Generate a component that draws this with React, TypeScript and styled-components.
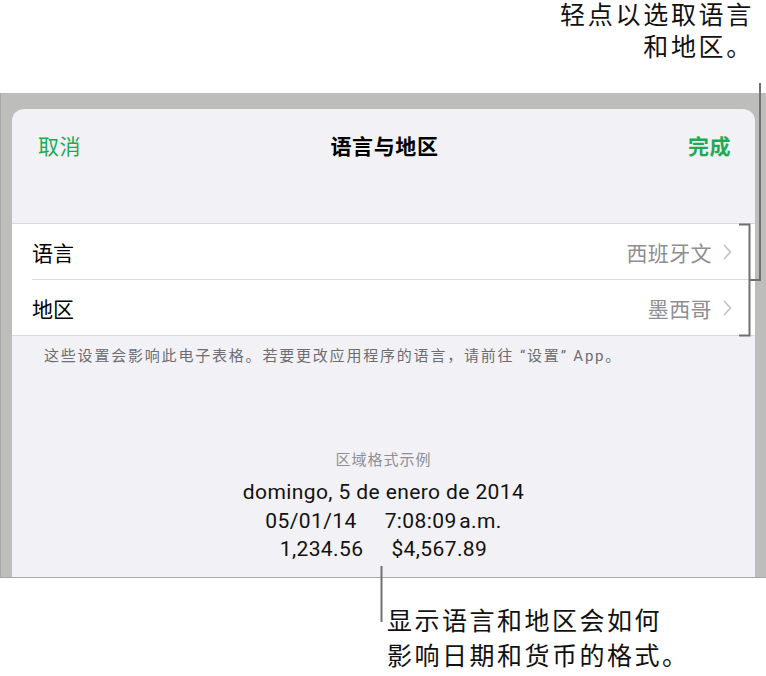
import React from "react";
import styled, { createGlobalStyle } from "styled-components";

const GlobalStyle = createGlobalStyle`
  html, body {
    margin: 0;
    padding: 0;
    background: #ffffff;
  }
  body {
    font-family: Roboto, "Noto Sans CJK SC", sans-serif;
    color: #000;
  }
`;

const GREEN = "#1fa955";
const LINE = "#707070";

const App: React.FC = () => {
  return (
    <>
      <GlobalStyle />
      <Page>
        <TopNote>
          轻点以选取语言
          <br />
          和地区。
        </TopNote>

        <Frame>
          <Sheet>
            <NavBar>
              <NavButton>取消</NavButton>
              <NavTitle>语言与地区</NavTitle>
              <NavButton bold>完成</NavButton>
            </NavBar>

            <Group>
              <Row>
                <RowLabel>语言</RowLabel>
                <RowValue>西班牙文</RowValue>
                <Chevron />
              </Row>
              <Row last>
                <RowLabel>地区</RowLabel>
                <RowValue>墨西哥</RowValue>
                <Chevron />
              </Row>
            </Group>
            <Footer>
              这些设置会影响此电子表格。若要更改应用程序的语言，请前往 “设置” App。
            </Footer>

            <Sample>
              <SampleTitle>区域格式示例</SampleTitle>
              <SampleLine>domingo, 5 de enero de 2014</SampleLine>
              <SampleLine>
                05/01/14<Gap />7:08:09&#8202;a.m.
              </SampleLine>
              <SampleLine>
                1,234.56<Gap />$4,567.89
              </SampleLine>
            </Sample>
          </Sheet>
        </Frame>

        <BottomNote>
          显示语言和地区会如何
          <br />
          影响日期和货币的格式。
        </BottomNote>

        <Callouts width="766" height="676" viewBox="0 0 766 676">
          <g stroke={LINE} strokeWidth="2" fill="none">
            <path d="M739 224.5 H749.5 V335.5 H739" />
            <path d="M749.5 280 H760 V83" />
            <path d="M381.5 566 V622" />
          </g>
        </Callouts>
      </Page>
    </>
  );
};

const Chevron: React.FC = () => (
  <ChevronIcon width="9" height="16" viewBox="0 0 9 16">
    <path
      d="M1.5 1.5 L7.5 8 L1.5 14.5"
      stroke="#c4c4c8"
      strokeWidth="1.8"
      fill="none"
      strokeLinecap="round"
      strokeLinejoin="round"
    />
  </ChevronIcon>
);

const Page = styled.div`
  position: relative;
  width: 766px;
  height: 676px;
  overflow: hidden;
  display: flex;
  flex-direction: column;
`;

const Note = styled.div`
  font-family: Roboto, "Noto Sans CJK SC", sans-serif;
  font-size: 25px;
  letter-spacing: 2.5px;
  line-height: 33px;
  color: #111;
`;

const TopNote = styled(Note)`
  height: 93px;
  box-sizing: border-box;
  padding: 0 12px 0 0;
  line-height: 32px;
  letter-spacing: 2.7px;
  text-align: right;
`;

const BottomNote = styled(Note)`
  padding: 26px 0 0 387px;
  line-height: 35px;
`;

const Frame = styled.div`
  height: 485px;
  box-sizing: border-box;
  background: #bdbebb;
  border-left: 1px solid #a9aaa7;
  border-bottom: 1px solid #a7a8a5;
  padding: 16px 11px 0 11px;
  display: flex;
`;

const Sheet = styled.div`
  flex: 1;
  background: #f2f2f6;
  border-radius: 12px 12px 0 0;
  overflow: hidden;
  display: flex;
  flex-direction: column;
`;

const NavBar = styled.div`
  height: 72px;
  display: flex;
  align-items: center;
  justify-content: space-between;
  padding: 0 24px 0 26px;
  margin-bottom: 42px;
`;

const NavButton = styled.span<{ bold?: boolean }>`
  font-family: "Noto Sans CJK SC", sans-serif;
  font-size: 21px;
  letter-spacing: 0.5px;
  color: ${GREEN};
  font-weight: ${(p) => (p.bold ? 700 : 400)};
`;

const NavTitle = styled.span`
  font-family: "Noto Sans CJK SC", sans-serif;
  font-size: 21px;
  font-weight: 700;
  color: #000;
  letter-spacing: 0.6px;
`;

const Group = styled.div`
  background: #ffffff;
  border-top: 1px solid #d9d9dd;
  border-bottom: 1px solid #d9d9dd;
  padding-left: 20px;
`;

const Row = styled.div<{ last?: boolean }>`
  height: ${(p) => (p.last ? "55px" : "56px")};
  display: flex;
  align-items: center;
  padding-right: 23px;
  border-bottom: ${(p) => (p.last ? "none" : "1px solid #dcdce0")};
  box-sizing: border-box;
`;

const RowLabel = styled.span`
  flex: 1;
  font-family: "Noto Sans CJK SC", sans-serif;
  font-size: 21px;
  color: #000;
`;

const RowValue = styled.span`
  font-family: "Noto Sans CJK SC", sans-serif;
  font-size: 21px;
  letter-spacing: 0.4px;
  color: #8e8e93;
  margin-right: 11px;
`;

const ChevronIcon = styled.svg`
  display: block;
`;

const Footer = styled.div`
  font-family: Roboto, "Noto Sans CJK SC", sans-serif;
  font-size: 15px;
  letter-spacing: 1.8px;
  color: #6d6d72;
  padding: 8px 0 0 32px;
`;

const Sample = styled.div`
  display: flex;
  flex-direction: column;
  align-items: center;
  padding-top: 83px;
`;

const SampleTitle = styled.div`
  font-family: "Noto Sans CJK SC", sans-serif;
  font-size: 15px;
  letter-spacing: 1px;
  color: #8e8e93;
  margin-bottom: 9px;
`;

const SampleLine = styled.div`
  font-family: Roboto, "Noto Sans CJK SC", sans-serif;
  font-size: 21px;
  letter-spacing: 0.4px;
  line-height: 28.5px;
  color: #111;
`;

const Gap = styled.span`
  display: inline-block;
  width: 28px;
`;

const Callouts = styled.svg`
  position: absolute;
  left: 0;
  top: 0;
  pointer-events: none;
`;

export default App;
